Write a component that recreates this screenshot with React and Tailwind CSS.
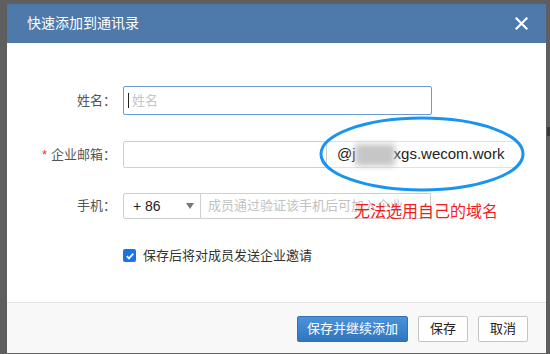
import React from 'react';

const font = { fontFamily: '"Liberation Sans", "Noto Sans CJK SC", sans-serif' };

export default function App() {
  return (
    <div className="w-[550px] h-[354px] bg-[#5f5f5f] pt-[4px] pl-[7px] relative overflow-hidden" style={font}>
      {/* stray mark behind dialog */}
      <div className="absolute left-[547px] top-[127px] w-[3px] h-[9px] bg-[#3a3a3a]" />

      <div className="w-[539px] h-[349px] flex flex-col bg-white">
        {/* Header */}
        <div className="h-[39px] bg-[#4d79ab] flex items-center justify-between pl-[20px] pr-[18px]">
          <span className="text-[14px] text-white">快速添加到通讯录</span>
          <svg width="13" height="13" viewBox="0 0 13 13">
            <path d="M1.5 1.5 L11.5 11.5 M11.5 1.5 L1.5 11.5" stroke="#fff" strokeWidth="2.2" strokeLinecap="square" />
          </svg>
        </div>

        {/* Body */}
        <div className="flex-1 relative pt-[43px]">
          <div className="grid grid-cols-[109px_1fr] gap-x-[7px] items-center">
            {/* Name */}
            <div className="text-right text-[13px] text-[#555]">姓名：</div>
            <div className="h-[29px] w-[309px] border border-[#6d9ad0] rounded-[2px] flex items-center pl-[4px] text-[13px]">
              <span className="w-px h-[15px] bg-[#222] mr-[3px]" />
              <span className="text-[#c6c6c6]">姓名</span>
            </div>

            {/* Email */}
            <div className="text-right text-[13px] text-[#555] mt-[26px]">
              <span className="text-[#e33] mr-[4px]">*</span>企业邮箱：
            </div>
            <div className="flex mt-[26px] h-[27px]">
              <div className="w-[204px] border border-[#cfcfcf] rounded-l-[2px]" />
              <div className="w-[190px] flex items-center pl-[10px] border-y border-[#e2e2e2] text-[15px] text-[#222] bg-white">
                <span>@j</span>
                <span className="inline-block w-[40px] h-[22px] bg-[#c6c6c6] blur-[3px] -mx-[1px]" />
                <span>xgs.wecom.work</span>
              </div>
            </div>

            {/* Phone */}
            <div className="text-right text-[13px] text-[#555] mt-[25px]">手机：</div>
            <div className="flex mt-[25px] h-[26px]">
              <div className="w-[78px] border border-[#cfcfcf] rounded-l-[2px] flex items-center justify-between pl-[9px] pr-[6px] text-[14px] text-[#222]">
                <span>+ 86</span>
                <svg width="8" height="6" viewBox="0 0 8 6">
                  <path d="M0 0 L8 0 L4 6 Z" fill="#777" />
                </svg>
              </div>
              <div className="w-[230px] border border-[#cfcfcf] border-l-0 flex items-center pl-[7px] text-[13px] text-[#c2c2c2] overflow-hidden whitespace-nowrap">
                成员通过验证该手机后可加入企业
              </div>
            </div>

            {/* Checkbox */}
            <div />
            <div className="flex items-center mt-[27px] text-[13px] text-[#333]">
              <span className="w-[13px] h-[13px] rounded-[2px] bg-[#1a73e8] flex items-center justify-center mr-[7px]">
                <svg width="10" height="10" viewBox="0 0 10 10">
                  <path d="M1.8 5.2 L4 7.4 L8.3 2.6" stroke="#fff" strokeWidth="1.8" fill="none" />
                </svg>
              </span>
              保存后将对成员发送企业邀请
            </div>
          </div>

          {/* Annotation ellipse */}
          <svg className="absolute left-[311px] top-[72px]" width="210" height="78" viewBox="0 0 210 78">
            <ellipse cx="104" cy="39" rx="101" ry="36" fill="none" stroke="#1a95ef" strokeWidth="3" />
          </svg>
          {/* Annotation text */}
          <div className="absolute left-[347px] top-[161px] text-[16px] text-[#f21d1d] leading-none">
            无法选用自己的域名
          </div>
        </div>

        {/* Footer */}
        <div className="h-[51px] border-t border-[#e5e5e5] bg-[#f8f8f8] flex items-center justify-end pr-[18px] gap-[10px] pt-[2px]">
          <button className="h-[26px] w-[111px] rounded-[2px] border border-[#2f72b8] bg-gradient-to-b from-[#4a93d9] to-[#2f76bf] text-white text-[13px]">
            保存并继续添加
          </button>
          <button className="h-[26px] w-[50px] rounded-[2px] border border-[#c4c4c4] bg-white text-[#222] text-[13px]">
            保存
          </button>
          <button className="h-[26px] w-[50px] rounded-[2px] border border-[#c4c4c4] bg-white text-[#222] text-[13px]">
            取消
          </button>
        </div>
      </div>
    </div>
  );
}
